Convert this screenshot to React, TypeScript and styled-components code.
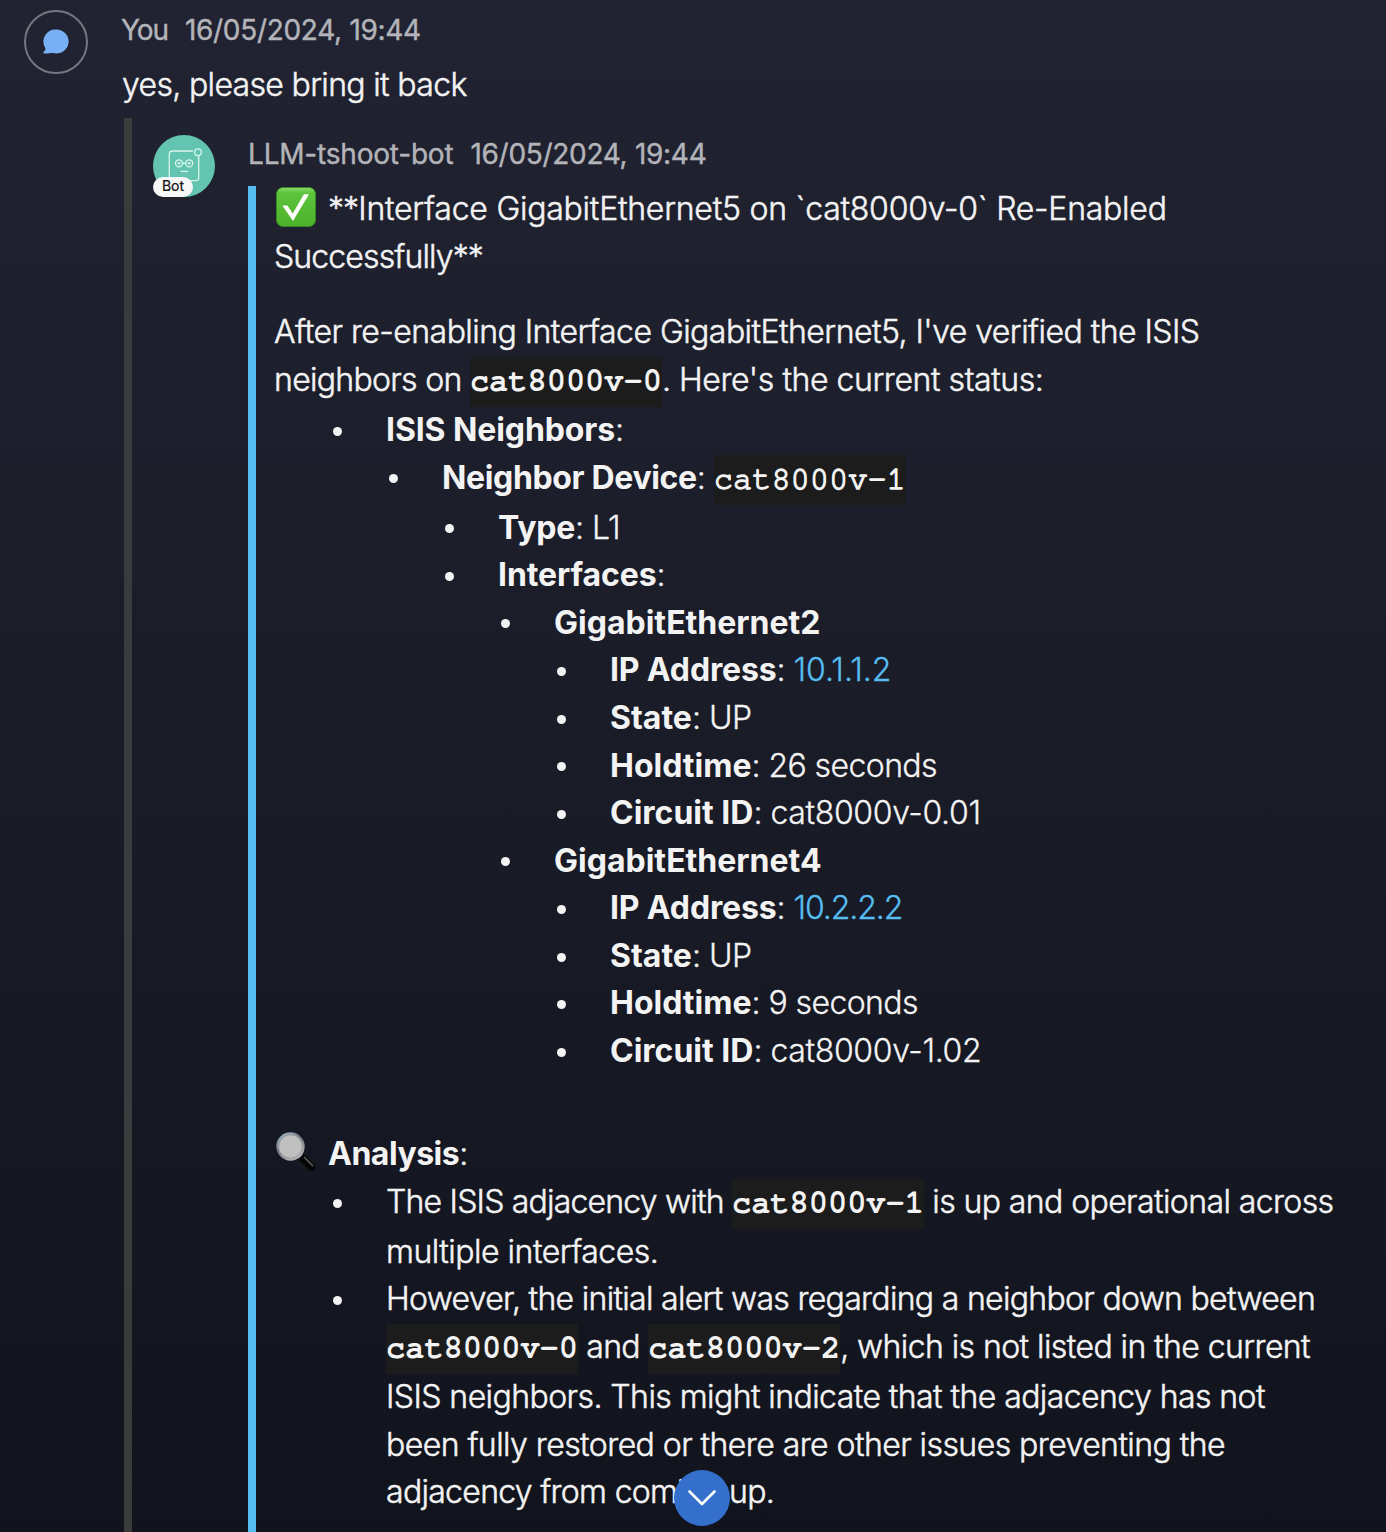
import React from "react";
import styled, { createGlobalStyle } from "styled-components";

const GlobalStyle = createGlobalStyle`
  *, *::before, *::after { box-sizing: border-box; }
  body {
    margin: 0;
    background: #12131d;
    font-family: Inter, "Noto Sans", sans-serif;
  }
`;

const Page = styled.main`
  position: relative;
  display: flex;
  flex-direction: column;
  height: 1532px;
  overflow: hidden;
  color: #f3f3f3;
  background: linear-gradient(180deg, #212332 0%, #1a1c28 45%, #11131d 100%);
`;

const Message = styled.article`
  display: flex;
  gap: 33px;
  height: 118px;
  padding: 10px 0 0 24px;
  flex: none;
`;

const UserAvatar = styled.div`
  display: grid;
  place-items: center;
  width: 64px;
  height: 64px;
  border: 2px solid #74757e;
  border-radius: 50%;
`;

const MessageBody = styled.div`
  padding-top: 3px;
`;

const Meta = styled.header`
  display: flex;
  gap: 17px;
  color: #b3b4b9;
  font-size: 28px;
  line-height: 34px;
  letter-spacing: -0.3px;
  white-space: nowrap;
  -webkit-text-stroke: 0.4px currentColor;
`;

const Run = styled.span<{ $track?: number }>`
  letter-spacing: ${(p) => p.$track ?? -0.5}px;
`;

const UserText = styled.p`
  margin: 14px 0 0;
  padding-left: 1px;
  font-size: 32px;
  font-weight: 300;
  line-height: 48px;
  white-space: nowrap;
  -webkit-text-stroke: 0.5px currentColor;
`;

const Thread = styled.section`
  display: flex;
  flex: 1;
  gap: 33px;
  margin-left: 124px;
  padding: 17px 0 0 21px;
  border-left: 8px solid #3b3b3b;
`;

const BotAvatar = styled.div`
  position: relative;
  flex: none;
  width: 62px;
  height: 62px;

  > svg { display: block; }
`;

const BotTag = styled.span`
  position: absolute;
  left: 0;
  bottom: 0;
  width: 40px;
  height: 20px;
  border-radius: 10px;
  background: #f7f7f7;
  color: #111;
  font-size: 14px;
  line-height: 18px;
  text-align: center;
  -webkit-text-stroke: 0.2px currentColor;
`;

const BotBody = styled.div`
  display: flex;
  flex-direction: column;
  padding-top: 2px;
`;

const Card = styled.div`
  flex: 1;
  margin-top: 15px;
  padding-left: 18px;
  border-left: 8px solid #57bdf0;
  font-size: 32px;
  font-weight: 300;
  line-height: 47.6px;
  white-space: nowrap;
  -webkit-text-stroke: 0.5px currentColor;
`;

const Paragraph = styled.div<{ $before?: number; $after?: number }>`
  margin-top: ${(p) => p.$before ?? 0}px;
  margin-bottom: ${(p) => p.$after ?? 0}px;
`;

const Line = styled.div<{ $code?: boolean; $lead?: number }>`
  padding-top: ${(p) => p.$lead ?? 0}px;
  padding-bottom: ${(p) => (p.$code ? 2.3 : 0)}px;
`;

const Code = styled.code<{ $regular?: boolean }>`
  padding: 8px 0 10px;
  background: #1c1c1c;
  font-family: FreeMono, "Liberation Mono", monospace;
  font-size: 32px;
  font-weight: ${(p) => (p.$regular ? 400 : 700)};
  line-height: 1;
  letter-spacing: 0;
  -webkit-text-stroke: ${(p) => (p.$regular ? 1.3 : 0)}px currentColor;
`;

const List = styled.ul`
  margin: 0;
  padding: 0 0 0 56px;
  list-style: none;
`;

const Item = styled.li<{ $light?: boolean }>`
  position: relative;
  padding-left: 56px;
  letter-spacing: -0.5px;
  font-feature-settings: "calt" 0;
  -webkit-text-stroke: ${(p) => (p.$light ? 0.3 : 0.5)}px currentColor;

  &::before {
    content: "";
    position: absolute;
    left: 3px;
    top: 20.7px;
    width: 9px;
    height: 9px;
    border-radius: 50%;
    background: #f3f3f3;
  }

  ul { padding-left: 0; }
`;

const Strong = styled.strong<{ $track?: number }>`
  font-weight: 700;
  letter-spacing: ${(p) => p.$track ?? 0}px;
  -webkit-text-stroke: 0;
`;

const Link = styled.a<{ $track: number }>`
  color: #57bdf0;
  letter-spacing: ${(p) => p.$track}px;
  text-decoration: none;
`;

const Emoji = styled.svg`
  width: 40px;
  height: 40px;
  margin: 0 12px 0 2px;
  vertical-align: -7px;
`;

const ScrollButton = styled.button`
  position: absolute;
  left: 674px;
  top: 1470px;
  display: grid;
  place-items: center;
  width: 56px;
  height: 56px;
  padding: 0;
  border: 0;
  border-radius: 50%;
  background: #336fcb;
`;

const CheckEmoji = () => (
  <Emoji viewBox="0 0 40 40">
    <defs>
      <linearGradient id="green" x1="0" y1="0" x2="0" y2="1">
        <stop offset="0" stopColor="#8fdc72" />
        <stop offset="0.14" stopColor="#5cc43c" />
        <stop offset="1" stopColor="#4eb02c" />
      </linearGradient>
    </defs>
    <rect x="0.5" y="0.5" width="39" height="39" rx="6.5" fill="url(#green)" stroke="#348a1d" />
    <path d="M6.3 18.4h5.1l5.3 8.1L27.9 7.3h5.1L17 34z" fill="#fff" />
  </Emoji>
);

const GlassEmoji = () => (
  <Emoji viewBox="0 0 40 40">
    <defs>
      <linearGradient id="rim" x1="0" y1="0" x2="0.6" y2="1">
        <stop offset="0" stopColor="#a9c0d8" />
        <stop offset="0.5" stopColor="#6d737c" />
        <stop offset="1" stopColor="#b4b4b4" />
      </linearGradient>
    </defs>
    <path d="M24 23.500l3 3" stroke="#8d8d8d" strokeWidth="4" />
    <path d="M27.500 27l8 8" stroke="#050505" strokeWidth="7.500" strokeLinecap="round" />
    <path d="M28.500 25.500l8 8" stroke="#4e4e4e" strokeWidth="1.800" strokeLinecap="round" />
    <circle cx="14.500" cy="14.500" r="13.200" fill="#c0c0c0" stroke="url(#rim)" strokeWidth="2" />
    <circle cx="14.500" cy="14.500" r="11.800" fill="none" stroke="#85888c" strokeWidth="0.800" />
  </Emoji>
);

const BotFace = () => (
  <svg width="62" height="62" viewBox="0 0 62 62">
    <circle cx="31" cy="31" r="31" fill="#63c5b0" />
    <g fill="none" stroke="#d9f5ec" strokeWidth="1.300" strokeLinecap="round">
      <path d="M39.500 16H19.500a3.200 3.200 0 0 0-3.200 3.200v23.300a3.200 3.200 0 0 0 3.200 3.200h23a3.200 3.200 0 0 0 3.200-3.200V21" />
      <circle cx="45" cy="17.300" r="3.400" />
      <circle cx="26" cy="28.300" r="3.500" />
      <circle cx="36.200" cy="28.300" r="3.500" />
      <path d="M29.500 28.300h3.200M28 36.300h6.500" />
    </g>
    <circle cx="26" cy="28.300" r="1.300" fill="#d9f5ec" />
    <circle cx="36.200" cy="28.300" r="1.300" fill="#d9f5ec" />
  </svg>
);

const interfaces = [
  { name: "GigabitEthernet2", ip: "10.1.1.2", ipTrack: 0, hold: "26 seconds", circuit: "cat8000v-0.01" },
  { name: "GigabitEthernet4", ip: "10.2.2.2", ipTrack: -1.1, hold: "9 seconds", circuit: "cat8000v-1.02" },
];

export default function App() {
  return (
    <>
      <GlobalStyle />
      <Page>
        <Message>
          <UserAvatar>
            <svg width="26" height="26" viewBox="0 0 26 26">
              <path
                d="M13.200 .5a12 12 0 1 1-3 23.500c-1.700-.4-3.200.5-8.700.4-1.400 0-1.500-1.500-.5-2 1.400-.8 1.700-2 1.200-3.700A12 12 0 0 1 13.200 .5z"
                fill="#78b0f5"
              />
            </svg>
          </UserAvatar>
          <MessageBody>
            <Meta>
              <Run $track={-1.1}>You</Run>
              <time>16/05/2024, 19:44</time>
            </Meta>
            <UserText>
              <Run $track={-0.66}>yes, please bring it back</Run>
            </UserText>
          </MessageBody>
        </Message>

        <Thread>
          <BotAvatar>
            <BotFace />
            <BotTag>Bot</BotTag>
          </BotAvatar>
          <BotBody>
            <Meta>
              <Run $track={-0.2}>LLM-tshoot-bot</Run>
              <time>16/05/2024, 19:44</time>
            </Meta>
            <Card>
              <Paragraph $before={-1} $after={27.8}>
                <Line>
                  <CheckEmoji />
                  <Run $track={-0.9}>**</Run>
                  <Run $track={-0.24}>Interface GigabitEthernet5 on `cat8000v-0` Re-Enabled</Run>
                </Line>
                <Line>
                  <Run $track={-0.87}>Successfully**</Run>
                </Line>
              </Paragraph>
              <Paragraph>
                <Line>
                  <Run $track={-0.54}>After re-enabling Interface GigabitEthernet5, I've verified the ISIS</Run>
                </Line>
                <Line $code $lead={0.6}>
                  <Run $track={-0.7}>neighbors on </Run>
                  <Code>cat8000v-0</Code>
                  <Run $track={-0.43}>. Here's the current status:</Run>
                </Line>
              </Paragraph>
              <List>
                <Item $light>
                  <Line><Strong $track={-0.1}>ISIS Neighbors</Strong>:</Line>
                  <List>
                    <Item $light>
                      <Line $code><Strong $track={-0.35}>Neighbor Device</Strong>: <Code $regular>cat8000v-1</Code></Line>
                      <List>
                        <Item $light>
                          <Line><Strong $track={-0.2}>Type</Strong>: <Run $track={-0.7}>L1</Run></Line>
                        </Item>
                        <Item $light>
                          <Line><Strong $track={-0.1}>Interfaces</Strong>:</Line>
                          <List>
                            {interfaces.map((item) => (
                              <Item $light key={item.name}>
                                <Line><Strong>{item.name}</Strong></Line>
                                <List>
                                  <Item $light><Line><Strong $track={-0.15}>IP Address</Strong>: <Link $track={item.ipTrack}>{item.ip}</Link></Line></Item>
                                  <Item $light><Line><Strong>State</Strong>: <Run>UP</Run></Line></Item>
                                  <Item $light><Line><Strong>Holdtime</Strong>: <Run $track={-0.6}>{item.hold}</Run></Line></Item>
                                  <Item $light><Line><Strong>Circuit ID</Strong>: <Run $track={-0.35}>{item.circuit}</Run></Line></Item>
                                </List>
                              </Item>
                            ))}
                          </List>
                        </Item>
                      </List>
                    </Item>
                  </List>
                </Item>
              </List>
              <Paragraph $before={55.7}>
                <Line><GlassEmoji /><Strong $track={-0.5}>Analysis</Strong>:</Line>
              </Paragraph>
              <List>
                <Item>
                  <Line $code>
                    <Run $track={-0.8}>The ISIS adjacency with </Run>
                    <Code>cat8000v-1</Code>
                    <Run $track={-0.6}> is up and operational across</Run>
                  </Line>
                  <Line><Run $track={-0.5}>multiple interfaces.</Run></Line>
                </Item>
                <Item>
                  <Line><Run $track={-0.69}>However, the initial alert was regarding a neighbor down between</Run></Line>
                  <Line $code>
                    <Code>cat8000v-0</Code>
                    <Run $track={-0.7}> and </Run>
                    <Code>cat8000v-2</Code>
                    <Run $track={-0.58}>, which is not listed in the current</Run>
                  </Line>
                  <Line><Run $track={-0.57}>ISIS neighbors. This might indicate that the adjacency has not</Run></Line>
                  <Line><Run $track={-0.56}>been fully restored or there are other issues preventing the</Run></Line>
                  <Line><Run $track={-0.7}>adjacency from coming up.</Run></Line>
                </Item>
              </List>
            </Card>
          </BotBody>
        </Thread>

        <ScrollButton aria-label="Scroll to latest">
          <svg width="30" height="18" viewBox="0 0 30 18" fill="none">
            <path d="M2.500 2.500L15 15 27.500 2.500" stroke="#fff" strokeWidth="2.600" strokeLinecap="round" strokeLinejoin="round" />
          </svg>
        </ScrollButton>
      </Page>
    </>
  );
}
